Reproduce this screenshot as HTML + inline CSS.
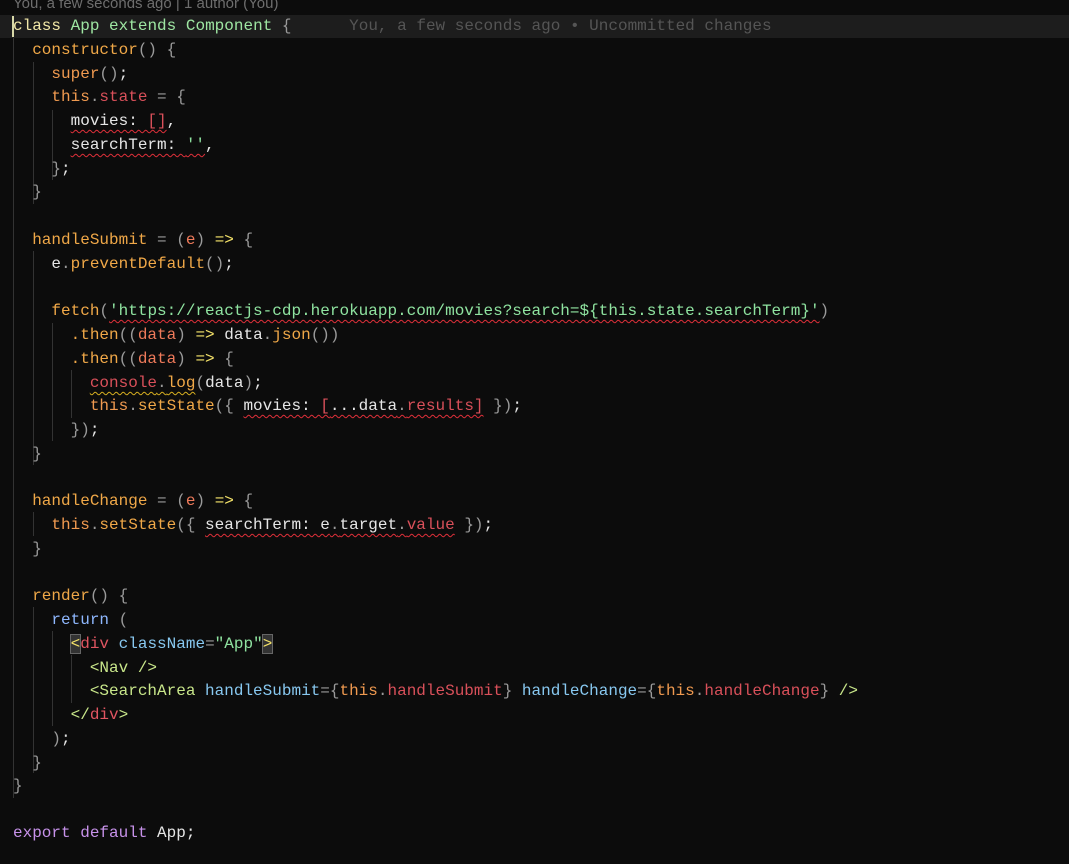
<!DOCTYPE html>
<html><head><meta charset="utf-8">
<style>
html,body{margin:0;padding:0;background:#0c0c0c;width:1069px;height:864px;overflow:hidden}
body{position:relative;font-family:"Liberation Mono",monospace;font-size:16px;color:#e6e6e6}
.blame-top{position:absolute;left:13px;top:-5px;font-family:"Liberation Sans",sans-serif;font-size:15px;color:#6e6e6e;white-space:pre}
.hl{position:absolute;left:0;top:15px;width:1069px;height:23px;background:#1d1d1d}
.cursor{position:absolute;left:12px;top:16px;width:2px;height:21px;background:#d8d8a8}
.l{position:absolute;left:13px;white-space:pre;height:24px;line-height:24px}
.g{position:absolute;width:1px;background:#333}
.k1{color:#f2e8a8}.cl{color:#9ee6a2}.fn{color:#f0a848}.th{color:#f09a50}.pr{color:#d9505a}
.pu{color:#9a9a9a}.st{color:#8fe3a0}.ar{color:#f5e36a}.pa{color:#ef7a5a}
.tag{color:#e05561}.at{color:#88c8f0}.cmp{color:#c8e68a}.kw{color:#8fb8ff}.ex{color:#c792ea}
.w{text-decoration:underline wavy #e0303a;text-decoration-thickness:1px;text-underline-offset:4px;text-decoration-skip-ink:none}
.wy{text-decoration:underline wavy #d8b020;text-decoration-thickness:1px;text-underline-offset:4px;text-decoration-skip-ink:none}
.bx{outline:1px solid #666;background:#333}
.bl{color:#555;font-size:16px}
</style></head><body>
<div class="blame-top">You, a few seconds ago | 1 author (You)</div>
<div class="hl"></div>
<!-- indent guides -->
<div class="g" style="left:13px;top:38px;height:760px"></div>
<div class="g" style="left:33px;top:62px;height:142px"></div>
<div class="g" style="left:52px;top:110px;height:70px"></div>
<div class="g" style="left:33px;top:251px;height:214px"></div>
<div class="g" style="left:52px;top:323px;height:118px"></div>
<div class="g" style="left:71px;top:370px;height:48px"></div>
<div class="g" style="left:33px;top:512px;height:24px"></div>
<div class="g" style="left:33px;top:607px;height:166px"></div>
<div class="g" style="left:52px;top:631px;height:95px"></div>
<div class="g" style="left:71px;top:655px;height:48px"></div>

<div class="l" style="top:14px"><span class="k1">class</span> <span class="cl">App</span> <span class="cl">extends</span> <span class="cl">Component</span> <span class="pu">{</span>      <span class="bl">You, a few seconds ago • Uncommitted changes</span></div>
<div class="cursor"></div>
<div class="l" style="top:38px">  <span class="fn">constructor</span><span class="pu">()</span> <span class="pu">{</span></div>
<div class="l" style="top:62px">    <span class="th">super</span><span class="pu">()</span>;</div>
<div class="l" style="top:85px">    <span class="th">this</span><span class="pu">.</span><span class="pr">state</span> <span class="pu">=</span> <span class="pu">{</span></div>
<div class="l" style="top:109px">      <span class="w">movies: <span class="pr">[]</span></span>,</div>
<div class="l" style="top:133px">      <span class="w">searchTerm: <span class="st">''</span></span>,</div>
<div class="l" style="top:157px">    <span class="pu">}</span>;</div>
<div class="l" style="top:180px">  <span class="pu">}</span></div>
<div class="l" style="top:228px">  <span class="fn">handleSubmit</span> <span class="pu">=</span> <span class="pu">(</span><span class="pa">e</span><span class="pu">)</span> <span class="ar">=&gt;</span> <span class="pu">{</span></div>
<div class="l" style="top:252px">    e<span class="pu">.</span><span class="fn">preventDefault</span><span class="pu">()</span>;</div>
<div class="l" style="top:299px">    <span class="fn">fetch</span><span class="pu">(</span><span class="st w">'https://reactjs-cdp.herokuapp.com/movies?search=${this.state.searchTerm}'</span><span class="pu">)</span></div>
<div class="l" style="top:323px">      <span class="fn">.then</span><span class="pu">((</span><span class="pa">data</span><span class="pu">)</span> <span class="ar">=&gt;</span> data<span class="pu">.</span><span class="fn">json</span><span class="pu">())</span></div>
<div class="l" style="top:347px">      <span class="fn">.then</span><span class="pu">((</span><span class="pa">data</span><span class="pu">)</span> <span class="ar">=&gt;</span> <span class="pu">{</span></div>
<div class="l" style="top:371px">        <span class="wy"><span class="pr">console</span><span class="pu">.</span><span class="fn">log</span></span><span class="pu">(</span>data<span class="pu">)</span>;</div>
<div class="l" style="top:394px">        <span class="th">this</span><span class="pu">.</span><span class="fn">setState</span><span class="pu">({</span> <span class="w">movies: <span class="pr">[</span>...data<span class="pu">.</span><span class="pr">results]</span></span> <span class="pu">})</span>;</div>
<div class="l" style="top:418px">      <span class="pu">})</span>;</div>
<div class="l" style="top:442px">  <span class="pu">}</span></div>
<div class="l" style="top:489px">  <span class="fn">handleChange</span> <span class="pu">=</span> <span class="pu">(</span><span class="pa">e</span><span class="pu">)</span> <span class="ar">=&gt;</span> <span class="pu">{</span></div>
<div class="l" style="top:513px">    <span class="th">this</span><span class="pu">.</span><span class="fn">setState</span><span class="pu">({</span> <span class="w">searchTerm: e<span class="pu">.</span>target<span class="pu">.</span><span class="pr">value</span></span> <span class="pu">})</span>;</div>
<div class="l" style="top:537px">  <span class="pu">}</span></div>
<div class="l" style="top:584px">  <span class="fn">render</span><span class="pu">()</span> <span class="pu">{</span></div>
<div class="l" style="top:608px">    <span class="kw">return</span> <span class="pu">(</span></div>
<div class="l" style="top:632px">      <span class="ar bx">&lt;</span><span class="tag">div</span> <span class="at">className</span><span class="pu">=</span><span class="st">"App"</span><span class="ar bx">&gt;</span></div>
<div class="l" style="top:656px">        <span class="cmp">&lt;Nav /&gt;</span></div>
<div class="l" style="top:679px">        <span class="cmp">&lt;SearchArea</span> <span class="at">handleSubmit</span><span class="pu">={</span><span class="th">this</span><span class="pu">.</span><span class="pr">handleSubmit</span><span class="pu">}</span> <span class="at">handleChange</span><span class="pu">={</span><span class="th">this</span><span class="pu">.</span><span class="pr">handleChange</span><span class="pu">}</span> <span class="cmp">/&gt;</span></div>
<div class="l" style="top:703px">      <span class="cmp">&lt;/</span><span class="tag">div</span><span class="cmp">&gt;</span></div>
<div class="l" style="top:727px">    <span class="pu">)</span>;</div>
<div class="l" style="top:751px">  <span class="pu">}</span></div>
<div class="l" style="top:774px"><span class="pu">}</span></div>
<div class="l" style="top:821px"><span class="ex">export</span> <span class="ex">default</span> App;</div>
</body></html>
